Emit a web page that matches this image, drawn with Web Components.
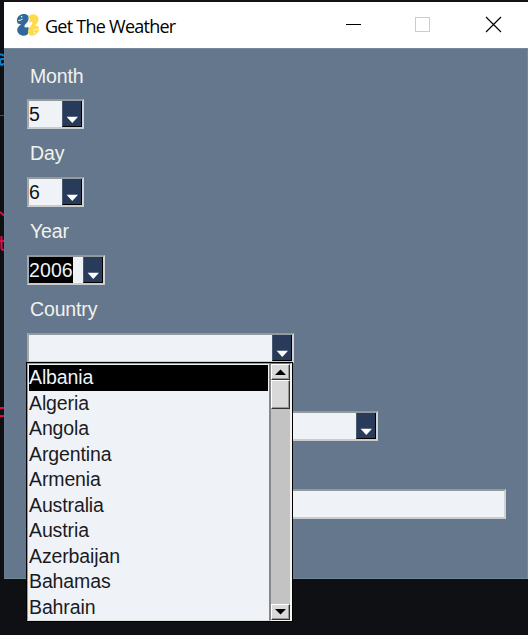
<!DOCTYPE html>
<html lang="en">
<head>
<meta charset="utf-8">
<title>Get The Weather</title>
<style>
html,body{margin:0;height:100%;overflow:hidden;background:#0f1014}
body{font-family:"Liberation Sans",Arial,sans-serif}
</style>
</head>
<body>
<weather-desktop></weather-desktop>
<script>
const define=(name,html,setup)=>customElements.define(name,class extends HTMLElement{
  constructor(){super();this.attachShadow({mode:'open'}).innerHTML=html;}
  connectedCallback(){if(setup)setup(this,this.shadowRoot);}
});

define('python-icon',`<style>:host{display:block;width:24px;height:24px}svg{display:block}</style>
<svg width="24" height="24" viewBox="0 0 24 24">
<path fill="#31699b" d="M6 1.2C8 .5 11 1 12 2.5C13 4.3 12.8 7 11.6 8.8L8.8 12C8 13.2 8.6 14.6 10 14.4L12.2 14C13 15.2 12.8 18.5 12 20.5C11 22.7 8 23.2 5.8 22.4C2.5 21.4.9 19 1.2 16.2C1.5 14 4 12.6 5.5 10.8C4 11.6 2 11 1.3 9.5C.5 7.8.9 6.5 1.3 5.3C2 3 4 1.9 6 1.2Z"/>
<path fill="#ffda4b" d="M14 2.2C16 .5 20 1.2 21.7 3.6C23.2 6 22.6 8.8 20.6 10.8L18.6 12.7C20.5 11.8 22.4 12.9 22.8 14.8C23.3 18 21.6 21 18.8 22C16.4 23.2 13.6 22.9 12.5 20.8C11.6 18.8 12.1 16.4 13.5 14.5L16 11.3C17.2 9.5 16 8.5 14.3 9.1L12.8 9.7C13.8 7.2 13.7 4.8 12.8 3Z"/>
<path fill="none" stroke="#fff" stroke-width="1" d="M2.2 7.4Q5 7.6 6.5 6M17.5 17.5Q19 16 21.8 16.3"/>
<circle cx="5.6" cy="3.7" r=".8" fill="#fff"/><circle cx="18.6" cy="19.8" r=".8" fill="#fff"/></svg>`);

define('title-bar',`<style>
:host{display:flex;align-items:center;height:46px;background:#fff;color:#000;box-sizing:border-box;padding-left:12px}
.t{font:18px/46px "Open Sans","Noto Sans",sans-serif;letter-spacing:-.75px;margin-left:5px;flex:1;white-space:nowrap;padding-top:1px}
svg{display:block;flex:none}</style>
<python-icon></python-icon><span class="t"><slot></slot></span>
<svg width="184" height="46" viewBox="0 0 184 46" fill="none" shape-rendering="crispEdges">
<path stroke="#000" d="M2 22.5H17"/><rect x="71.5" y="15.5" width="14" height="14" stroke="#ccc"/>
<path stroke="#000" stroke-width="1.15" shape-rendering="auto" d="M142 15L157 30M157 15L142 30"/></svg>`);

define('field-label',`<style>:host{display:block;height:35px;padding:0 0 0 3px;color:#f2f2ee;font-size:19.5px;line-height:22px;letter-spacing:-.15px;white-space:nowrap}</style><slot></slot>`);

define('combo-box',`<style>
:host{display:flex;box-sizing:border-box;width:var(--w);height:30px;margin-bottom:13px;background:#eff3f8;border:2px solid;border-color:#94999b #d0d2d3 #c9cccf #a8a8a8}
.v{flex:1;color:#111;font-size:19.5px;line-height:27px;letter-spacing:-.15px;overflow:hidden}
.v span{display:inline-block;height:26px}
:host([selected]) .v span{background:#000;color:#eff3f8;letter-spacing:.1px}
.b{width:20px;box-sizing:border-box;background:#283b5b;border-right:1px solid #000;border-bottom:1px solid #000;border-left:1px solid #4a5870;flex:none}
:host([plain]) .b{display:none}
svg{display:block}</style>
<div class="v"><span><slot></slot></span></div><div class="b"><svg width="18" height="25" viewBox="0 0 18 25"><path fill="#fff" d="M3.6 15.8H15L9.3 22Z"/></svg></div>`,
e=>e.style.setProperty('--w',e.getAttribute('width')+'px'));

define('country-item',`<style>:host{display:block;height:25.5px;line-height:25px;box-sizing:border-box}
:host([active]){background:#000;color:#eff3f8}</style><slot></slot>`);

define('list-scrollbar',`<style>
:host{display:flex;flex-direction:column;box-sizing:border-box;width:23px;height:258px;background:#c3c3c3;border:2px solid;border-width:1px 2px 1px 2px;border-color:#777 #f5f5f5 #f5f5f5 #888}
div{box-sizing:border-box;background:#d9d9d9;border:1px solid;border-color:#fff #333 #333 #fff;box-shadow:inset -1px -1px #999}
.a{height:16px}.th{height:29px}.sp{flex:1;background:none;border:0;box-shadow:none}
svg{display:block}</style>
<div class="a"><svg width="17" height="14"><path d="M3 10L8.5 4.5L14 10Z"/></svg></div><div class="th"></div><div class="sp"></div>
<div class="a"><svg width="17" height="14"><path d="M3 4L8.5 9.5L14 4Z"/></svg></div>`);

define('country-list',`<style>
:host{display:flex;box-sizing:border-box;width:267px;height:260px;border:1px solid #000;background:#eff3f8;color:#1b1b1f;font-size:19.5px;letter-spacing:-.12px}
.l{box-sizing:border-box;width:242px;height:258px;border:1px solid #999;border-right:0;border-bottom-color:#ddd;padding:1px 1px 0 1px}
</style><div class="l"><slot></slot></div><list-scrollbar></list-scrollbar>`);

define('app-window',`<style>
:host{display:block;width:524px;height:577px;background:#64778d;box-sizing:border-box}
.c{box-sizing:border-box;height:531px;padding:16px 22px 0 23px;border:1px solid #74889b;border-width:1px 1px 1px 0;box-shadow:inset 1px 0 #697d92}
</style><title-bar>Get The Weather</title-bar><div class="c"><slot></slot></div>`);

define('editor-edge',`<style>:host{display:block;width:528px;height:635px;background:#0f1014}svg{display:block}</style>
<svg width="528" height="635"><rect width="528" height="2" fill="#151119"/>
<path fill="none" stroke="#0786d8" stroke-width="1.8" d="M0 54.5H2L4 56M4 59H2Q0 59 0 61Q0 65 2 65L4 63.5"/>
<path fill="none" stroke="#d50a45" stroke-width="1" d="M0 115.5H4"/>
<path fill="none" stroke="#ed0549" stroke-width="2" d="M0 212L2.5 214L4 216M1.5 236V248Q1.5 250 4 250M0 241H4M0 408H4M0 416H4"/></svg>`);

define('weather-desktop',`<style>
:host{display:block;position:relative;width:528px;height:635px;overflow:hidden}
app-window{position:absolute;left:4px;top:2px}
country-list{position:absolute;left:26px;top:362px}
</style>
<editor-edge></editor-edge>
<app-window>
<field-label style="height:34px">Month</field-label><combo-box width="57">5</combo-box>
<field-label>Day</field-label><combo-box width="57">6</combo-box>
<field-label>Year</field-label><combo-box width="78" selected>2006</combo-box>
<field-label>Country</field-label><combo-box width="267"></combo-box>
<field-label></field-label><combo-box width="351"></combo-box>
<field-label></field-label><combo-box width="479" plain></combo-box>
</app-window>
<country-list>
<country-item active>Albania</country-item><country-item>Algeria</country-item><country-item>Angola</country-item><country-item>Argentina</country-item><country-item>Armenia</country-item><country-item>Australia</country-item><country-item>Austria</country-item><country-item>Azerbaijan</country-item><country-item>Bahamas</country-item><country-item>Bahrain</country-item>
</country-list>`);
</script>
</body>
</html>
